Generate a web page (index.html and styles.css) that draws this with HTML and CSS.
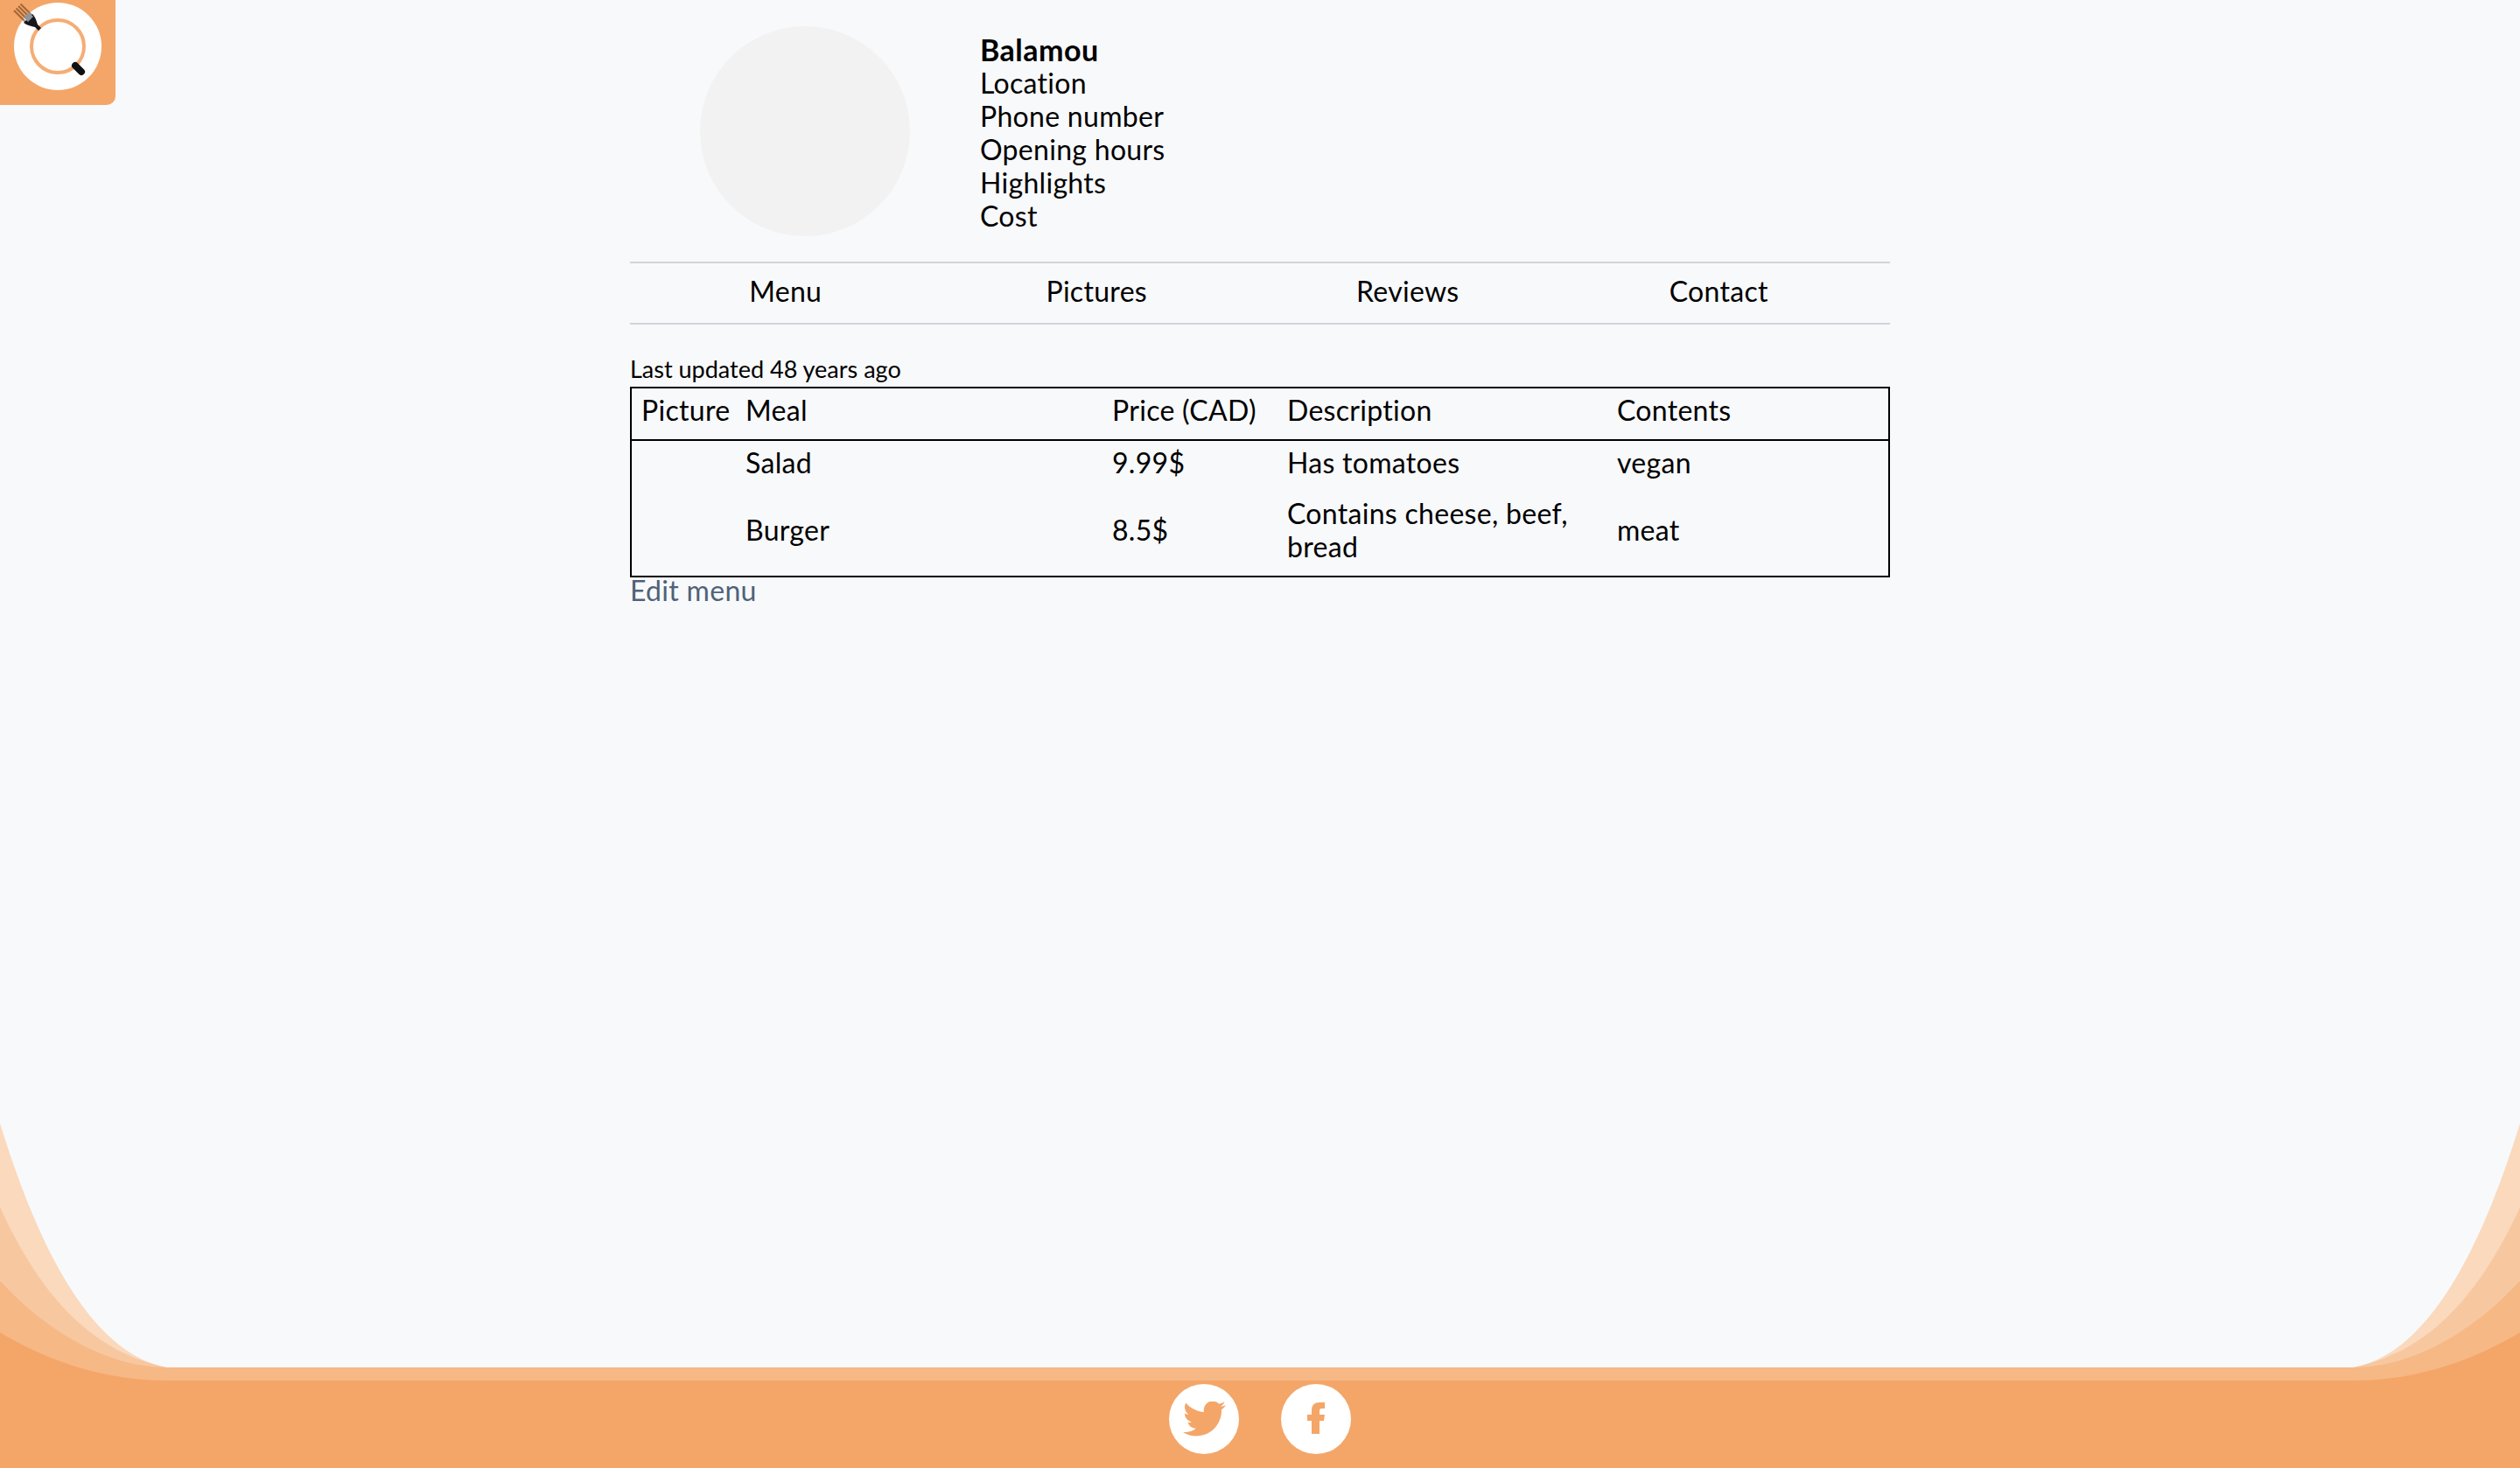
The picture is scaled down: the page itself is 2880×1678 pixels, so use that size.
FILE: index.html
```html
<!DOCTYPE html>
<html lang="en">
<head>
    <meta charset="UTF-8">
    <title>Balamou</title>
    <link rel="stylesheet" href="styles.css">
</head>
<body>
    <div class="page">
        <!-- Logo -->
        <a class="logo" href="#">
            <svg width="132" height="120" viewBox="0 0 132 120">
                <circle cx="66" cy="53" r="50" fill="#fff"/>
                <circle cx="66" cy="53" r="30" fill="none" stroke="#f5ad75" stroke-width="4"/>
                <g stroke="#7a4a24" stroke-width="2" stroke-opacity="0.7">
                    <line x1="16" y1="12" x2="31" y2="27"/>
                    <line x1="18.5" y1="9.5" x2="33.5" y2="24.5"/>
                    <line x1="21" y1="7" x2="36" y2="22"/>
                    <line x1="23.5" y1="4.5" x2="38.5" y2="19.5"/>
                </g>
                <path d="M27 26 L37 16 C41 20 42 25 43 28 L47 32 L44 35 L40 31 C36 30 31 29 27 26 Z" fill="#16181b"/>
                <path d="M27 20 L33 14 L38 19 L32 25 Z" fill="#8f959b"/>
                <line x1="86" y1="75" x2="93" y2="82" stroke="#111" stroke-width="8" stroke-linecap="round"/>
            </svg>
        </a>

        <main class="content">
            <section class="profile">
                <div class="avatar"></div>
                <div class="info">
                    <strong>Balamou</strong>
                    <div>Location</div>
                    <div>Phone number</div>
                    <div>Opening hours</div>
                    <div>Highlights</div>
                    <div>Cost</div>
                </div>
            </section>

            <nav class="tabs">
                <a href="#">Menu</a>
                <a href="#">Pictures</a>
                <a href="#">Reviews</a>
                <a href="#">Contact</a>
            </nav>

            <p class="updated">Last updated 48 years ago</p>

            <table class="menu-table">
                <colgroup>
                    <col class="col-picture">
                    <col class="col-meal">
                    <col class="col-price">
                    <col class="col-description">
                    <col class="col-contents">
                </colgroup>
                <thead>
                    <tr>
                        <th>Picture</th>
                        <th>Meal</th>
                        <th>Price (CAD)</th>
                        <th>Description</th>
                        <th>Contents</th>
                    </tr>
                </thead>
                <tbody>
                    <tr>
                        <td></td>
                        <td>Salad</td>
                        <td>9.99$</td>
                        <td>Has tomatoes</td>
                        <td>vegan</td>
                    </tr>
                    <tr>
                        <td></td>
                        <td>Burger</td>
                        <td>8.5$</td>
                        <td>Contains cheese, beef, bread</td>
                        <td>meat</td>
                    </tr>
                </tbody>
            </table>

            <a class="edit-link" href="#">Edit menu</a>
        </main>

        <footer class="footer">
            <svg class="waves" viewBox="0 0 2880 394" preserveAspectRatio="none">
                <path fill="#fad9bd" d="M0 0 C40 130 100 262 190 279 H2690 C2780 262 2840 130 2880 0 V394 H0 Z"/>
                <path fill="#f7c8a0" d="M0 96 C50 205 110 262 190 279 H2690 C2770 262 2830 205 2880 96 V394 H0 Z"/>
                <path fill="#f6b885" d="M0 180 C60 245 130 279 190 279 H2690 C2750 279 2820 245 2880 180 V394 H0 Z"/>
                <path fill="#f4a668" d="M0 239 C55 272 120 294 190 294 H2690 C2760 294 2825 272 2880 239 V394 H0 Z"/>
            </svg>
            <a class="social" href="#">
                <svg width="49" height="41" viewBox="0 2.6 24 19.8">
                    <path d="M23.953 4.57a10 10 0 01-2.825.775 4.958 4.958 0 002.163-2.723c-.951.555-2.005.959-3.127 1.184a4.92 4.92 0 00-8.384 4.482C7.69 8.095 4.067 6.13 1.64 3.162a4.822 4.822 0 00-.666 2.475c0 1.71.87 3.213 2.188 4.096a4.904 4.904 0 01-2.228-.616v.06a4.923 4.923 0 003.946 4.827 4.996 4.996 0 01-2.212.085 4.936 4.936 0 004.604 3.417 9.867 9.867 0 01-6.102 2.105c-.39 0-.779-.023-1.17-.067a13.995 13.995 0 007.557 2.209c9.053 0 13.998-7.496 13.998-13.985 0-.21 0-.42-.015-.63A9.935 9.935 0 0024 4.59z"/>
                </svg>
            </a>
            <a class="social" href="#">
                <svg class="social-f" width="20" height="36" viewBox="0 0 20 36">
                    <path d="M5 36 V21 H0 V14 H5 V9 C5 3 8.5 0 14 0 H20 V7 H16.5 C14.5 7 14 8 14 10 V14 H20 L19 21 H14 V36 Z"/>
                </svg>
            </a>
        </footer>
    </div>
</body>
</html>
```

FILE: styles.css
```css
body {
    margin: 0;
    background-color: #f8f9fb;
    color: #000;
    font-family: Lato, "Open Sans", sans-serif;
    font-size: 32px;
    line-height: 38px;
    letter-spacing: 0.3px;
}

a {
    color: inherit;
    text-decoration: none;
}

.page {
    display: flex;
    flex-direction: column;
    height: 100vh;
    overflow: hidden;
}

/* Logo */
.logo {
    position: absolute;
    top: 0;
    left: 0;
    display: block;
    width: 132px;
    height: 120px;
    background-color: #f4a668;
    border-bottom-right-radius: 10px;
}

.logo svg {
    display: block;
}

.content {
    flex: 1;
    width: 1440px;
    margin: 0 auto;
}

/* Restaurant header */
.profile {
    display: flex;
    gap: 80px;
    padding: 30px 0 29px 80px;
}

.avatar {
    width: 240px;
    height: 240px;
    border-radius: 50%;
    background-color: #f2f2f2;
}

.info {
    padding-top: 8px;
}

.info strong {
    display: block;
    font-size: 34px;
    font-weight: 700;
    letter-spacing: 0.5px;
}

/* Tabs */
.tabs {
    display: flex;
    border-top: 2px solid #d3d3da;
    border-bottom: 2px solid #d3d3da;
}

.tabs a {
    width: 355.5px;
    padding: 13px 0 17px;
    text-align: center;
}

/* Menu table */
.updated {
    margin: 32px 0 1px;
    font-size: 27px;
    letter-spacing: 0;
}

.menu-table {
    width: 100%;
    border: 2px solid #000;
    border-collapse: collapse;
    table-layout: fixed;
}

.menu-table th,
.menu-table td {
    padding: 6px 11px 14px;
    font-weight: 400;
    text-align: left;
}

.menu-table thead {
    border-bottom: 2px solid #000;
}

.col-picture { width: 120px; }
.col-meal { width: 419px; }
.col-price { width: 200px; }
.col-description { width: 377px; }

.edit-link {
    display: block;
    line-height: 30px;
    color: #4f6278;
}

/* Footer */
.footer {
    position: relative;
    display: flex;
    justify-content: center;
    align-items: flex-start;
    gap: 48px;
    height: 96px;
    padding-top: 4px;
}

.waves {
    position: absolute;
    left: 0;
    bottom: 0;
    width: 100%;
    height: 394px;
}

.social {
    position: relative;
    display: flex;
    justify-content: center;
    align-items: center;
    width: 80px;
    height: 80px;
    border-radius: 50%;
    background-color: #fff;
    fill: #f4a668;
}

.social-f {
    margin-bottom: 3px;
}
```
